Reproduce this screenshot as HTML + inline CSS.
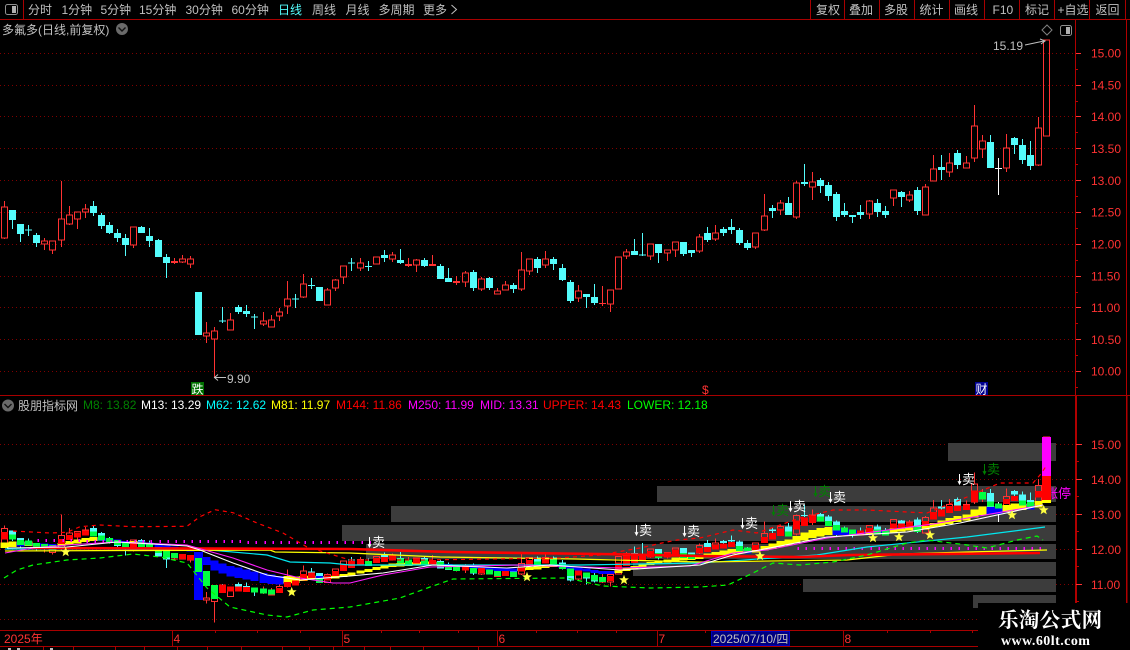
<!DOCTYPE html>
<html lang="zh">
<head>
<meta charset="utf-8">
<title>多氟多</title>
<style>
html,body{margin:0;padding:0;background:#000;width:1130px;height:650px;overflow:hidden}
svg{display:block;position:absolute;left:0;top:0}
text{font-family:"Liberation Sans","WenQuanYi Zen Hei","Noto Sans CJK SC",sans-serif;font-size:12px;fill:#c0c0c0}
.r{fill:#ff3232}
.crisp{shape-rendering:crispEdges}
</style>
</head>
<body>
<svg id="s" width="1130" height="650" viewBox="0 0 1130 650" xmlns="http://www.w3.org/2000/svg">
  <rect width="1130" height="650" fill="#000"/>
  <g id="grid"></g>
  <g class="crisp" fill="#3c3c3c">
    <rect x="948" y="443" width="108" height="18"/>
    <rect x="657" y="486" width="399" height="16"/>
    <rect x="391" y="506" width="665" height="16"/>
    <rect x="342" y="525" width="714" height="16"/>
    <rect x="366" y="544" width="690" height="15"/>
    <rect x="633" y="562" width="423" height="14"/>
    <rect x="803" y="579" width="253" height="13"/>
    <rect x="973" y="595" width="83" height="13"/>
  </g>
  <g id="up" class="crisp"></g>
  <g id="low" class="crisp"></g>
  <text x="1045" y="498" style="fill:#f0f;font-size:13px">涨停</text>
  <g id="bands" class="crisp"></g>
  <g id="lines" fill="none"></g>

  <!-- toolbar -->
  <g class="crisp" stroke="#a80000" fill="none">
    <path d="M0 19.5H1130M0 395.5H1075M23.5 0V19M810.5 0V19M844.5 0V19M879.5 0V19M914.5 0V19M949.5 0V19M984.5 0V19M1019.5 0V19M1054.5 0V19M1089.5 0V19M1125.5 0V19"/>
    <path d="M1075.5 20V603M1126.5 20V603" stroke="#b00000"/>
    <path d="M1076.5 396V603M1127 396V603" stroke="#b00000"/>
    <path d="M1075 395.5H1130"/>
    <path d="M0 630.5H978M0 646.5H978M172.5 630V646M342.5 630V646M497.5 630V646M657.5 630V646M843.5 630V646"/>
    <path d="M215.5 630V633M257.5 630V633M300.5 630V633M381.5 630V633M419.5 630V633M458.5 630V633M536.5 630V633M577.5 630V633M616.5 630V633M705.5 630V633M887.5 630V633M930.5 630V633M972.5 630V633"/>
    <path d="M43.5 646V650M73.5 646V650M115.5 646V650M144.5 646V650M177.5 646V650M207.5 646V650M241.5 646V650M282.5 646V650M309.5 646V650M333.5 646V650M364.5 646V650M390.5 646V650M423.5 646V650M478.5 646V650"/>
  </g>
  <g class="crisp" fill="#c0c0c0"><rect x="8" y="648" width="3" height="2"/><rect x="17" y="648" width="3" height="2"/><rect x="50" y="648" width="3" height="2"/></g>

  <!-- window icon -->
  <rect x="5.5" y="4.5" width="12" height="10" rx="2" fill="none" stroke="#909090"/>
  <rect x="12" y="6" width="4" height="7" fill="#b0b0b0"/>
  <text x="28" y="14">分时</text>
  <text x="61.5" y="14">1分钟</text>
  <text x="100.5" y="14">5分钟</text>
  <text x="139" y="14">15分钟</text>
  <text x="185.5" y="14">30分钟</text>
  <text x="231.5" y="14">60分钟</text>
  <text x="278" y="14" style="fill:#54fcfc">日线</text>
  <text x="312" y="14">周线</text>
  <text x="345.5" y="14">月线</text>
  <text x="378.5" y="14">多周期</text>
  <text x="423" y="14">更多</text>
  <path d="M451.5 5l5 4.5-5 4.5" fill="none" stroke="#c0c0c0"/>
  <text x="816" y="14">复权</text>
  <text x="849" y="14">叠加</text>
  <text x="884" y="14">多股</text>
  <text x="919.5" y="14">统计</text>
  <text x="954" y="14">画线</text>
  <text x="992.5" y="14">F10</text>
  <text x="1025" y="14">标记</text>
  <text x="1057.5" y="14">+自选</text>
  <text x="1095.5" y="14">返回</text>

  <text x="2" y="34">多氟多(日线,前复权)</text>
  <circle cx="122" cy="29" r="6" fill="#6a6a6a"/>
  <path d="M118.5 27.5l3.5 3.5 3.5-3.5" fill="none" stroke="#111" stroke-width="1.4"/>

  <polygon points="1047,25 1052,30 1047,35 1042,30" fill="none" stroke="#808080"/>
  <rect x="1060.5" y="25.5" width="11" height="10" rx="2" fill="none" stroke="#909090"/>
  <rect x="1066" y="27" width="4" height="7" fill="#b0b0b0"/>

  <text x="993" y="50">15.19</text>
  <path d="M1025 45L1044 41M1040 39L1045 41L1041 44" fill="none" stroke="#c0c0c0"/>
  <path d="M214 377.5H226M218 374.5L214.5 377.5L218 380.5" fill="none" stroke="#c0c0c0"/>
  <text x="227" y="383">9.90</text>

  <rect class="crisp" x="191" y="382" width="13" height="13" fill="#007000"/>
  <text x="191.5" y="393.5" style="fill:#fff">跌</text>
  <text x="702" y="394" class="r">$</text>
  <rect class="crisp" x="975" y="382" width="13" height="13" fill="#000090"/>
  <text x="975.5" y="393.5" style="fill:#fff">财</text>

  <!-- axis labels -->
  <g id="axis" class="crisp"></g>
  <text class="r" x="1091" y="57.5">15.00</text>
  <text class="r" x="1091" y="89.5">14.50</text>
  <text class="r" x="1091" y="121">14.00</text>
  <text class="r" x="1091" y="153">13.50</text>
  <text class="r" x="1091" y="185">13.00</text>
  <text class="r" x="1091" y="216.5">12.50</text>
  <text class="r" x="1091" y="248.5">12.00</text>
  <text class="r" x="1091" y="280.5">11.50</text>
  <text class="r" x="1091" y="312">11.00</text>
  <text class="r" x="1091" y="344">10.50</text>
  <text class="r" x="1091" y="375.5">10.00</text>
  <text class="r" x="1091" y="449">15.00</text>
  <text class="r" x="1091" y="484">14.00</text>
  <text class="r" x="1091" y="519">13.00</text>
  <text class="r" x="1091" y="554">12.00</text>
  <text class="r" x="1091" y="589">11.00</text>

  <!-- indicator title -->
  <circle cx="8" cy="405.5" r="6" fill="#6a6a6a"/>
  <path d="M4.5 404l3.5 3.5 3.5-3.5" fill="none" stroke="#111" stroke-width="1.4"/>
  <text x="18" y="410">股朋指标网</text>
  <text x="83" y="409" style="fill:#008000">M8: 13.82</text>
  <text x="141" y="409" style="fill:#fff">M13: 13.29</text>
  <text x="206" y="409" style="fill:#00ffff">M62: 12.62</text>
  <text x="271" y="409" style="fill:#ffff00">M81: 11.97</text>
  <text x="336" y="409" style="fill:#f00">M144: 11.86</text>
  <text x="408" y="409" style="fill:#f0f">M250: 11.99</text>
  <text x="480" y="409" style="fill:#f0f">MID: 13.31</text>
  <text x="543" y="409" style="fill:#f00">UPPER: 14.43</text>
  <text x="627" y="409" style="fill:#0f0">LOWER: 12.18</text>

  <!-- sell marks -->
  <g id="marks"></g>

  <!-- date axis -->
  <text class="r" x="4" y="643">2025年</text>
  <text class="r" x="173.5" y="643">4</text>
  <text class="r" x="343.5" y="643">5</text>
  <text class="r" x="498.5" y="643">6</text>
  <text class="r" x="658.5" y="643">7</text>
  <text class="r" x="844.5" y="643">8</text>
  <rect class="crisp" x="711.5" y="631.5" width="78" height="14" fill="#000080" stroke="#0000c0"/>
  <text x="713" y="643">2025/07/10/四</text>

  <!-- watermark -->
  <rect class="crisp" x="978" y="603" width="152" height="47" fill="#000"/>
  <text x="998" y="627" style="font-family:'Noto Serif CJK SC','Liberation Serif',serif;font-weight:700;font-size:20.5px;fill:#fff;letter-spacing:.4px">乐淘公式网</text>
  <text x="1001" y="645" style="font-family:'Liberation Serif',serif;font-weight:700;font-size:14px;fill:#fff;letter-spacing:.45px">www.60lt.com</text>
</svg>
<script>
(function(){
var D=[
['r',201,207,238,239],['c',210,210,220,229],['c',224,224,234,242],['c',225,229.5,230.5,236],['c',233,235,243,247],
['r',238,241,244,250],['r',241,241,250,254],['r',181,219,240,247],['r',206,215,224,225],['r',212,212,219,229],
['r',204,209,212,218],['c',201,206,213,216],['c',213,215,226,229],['c',222,225,233,234],['c',229,233,238,242],
['c',234,238,245,256],['r',227,227,245,248],['c',226,227,233,233],['c',228,236,241,247],['c',239,240,257,257],
['c',254,257,263,278],['f',258,261,263,264],['r',255,259,262,263],['r',256,259,264,268],['c',292,292,335,335],
['r',322,333,336,343],['r',327,331,339,377],['c',307,320.5,321.5,323],['r',313,320,330,330],['c',305,307,312,314],
['c',305,311,314,317],['c',314,316.5,317.5,329],['r',312,321,324,326],['r',315,320,327,327],['r',308,312,316,321],
['r',281,299,306,314],['c',294,298.5,299.5,308],['r',274,284,297,298],['c',278,285,286,289],['c',287,287,301,301],
['r',288,290,305,305],['r',279,280,288,291],['r',266,266,277,284],['c',258,262.5,263.5,271],['r',258,263,268,271],
['c',261,266,267,271],['r',257,257,264,264],['c',250,255,258,262],['r',252,255,259,262],['c',249,260,263,264],
['f',258,264,266,267],['r',259,260,265,272],['c',258,260,266,267],['f',255,264,266,266],['c',264,266,279,279],
['c',268,278,282,282],['f',276,281,283,285],['r',271,273,282,287],['c',270,272,288,291],['r',277,279,289,291],
['c',277,278,288,290],['r',288,291,294,294],['r',281,285,290,290],['c',283,285,289,293],['r',252,270,289,291],
['r',259,259,271,275],['c',257,259,268,273],['r',251,259,265,268],['c',257,259,264,270],['c',264,268,280,281],
['c',280,282,301,303],['r',285,291,298,302],['c',294,294,297,308],['c',284,297,303,305],['f',286,303,304,306],
['r',290,290,304,312],['r',257,257,289,289],['r',249,252,256,259],['c',239,251,255,255],['c',233,254.5,255.5,256],
['r',244,244,256,260],['c',244,244,253,263],['r',250,250,253,261],['r',242,242,250,257],['c',242,242,254,256],
['c',250,250,253,257],['r',234,237,251,253],['c',227,233,240,242],['r',225,233,239,241],['c',227,229,233,236],
['c',219,227,230,234],['c',228,230,243,245],['c',240,243,248,250],['r',233,233,247,249],['r',194,216,230,231],
['c',205,208,211,218],['r',200,203,210,215],['c',197,203,215,215],['r',181,183,217,219],['c',164,182,184,186],
['r',172,182,187,200],['c',178,180,186,193],['c',182,185,196,201],['c',192,194,217,221],['c',203,211,215,217],
['c',215,215,217,223],['c',205,212,215,219],['r',200,201,214,219],['c',199,203,212,217],['c',206,211,215,218],
['r',190,190,198,206],['c',191,192,197,207],['r',191,195,200,202],['c',187,190,211,215],['r',184,187,215,215],
['r',155,169,181,181],['c',155,167,170,180],['r',153,163,172,177],['c',150,153,165,169],['r',156,163,168,168],
['r',105,126,158,162],['r',135,141,149,158],['c',135,142,168,168],['w',158,168,169,195],['r',134,148,168,172],
['c',137,138,145,154],['c',139,145,160,164],['c',141,155,166,170],['r',117,128,165,166],['r',40,40,136,136]
];
var RED='#ff3232',CY='#54fcfc';
function X(i){return Math.floor(4.5+8.08*i)+.5;}
function L(y){return 444+(y-53)*0.5503;}
function I(v){return v;}
function candles(f){
  var h='';
  D.forEach(function(d,i){
    var x=X(i),t=d[0],H=f(d[1]),O=f(d[2]),B=f(d[3]),W=f(d[4]);
    if(B-O<1)B=O+1;
    var col=t=='c'?CY:(t=='w'?'#fff':RED);
    h+='<path d="M'+x+' '+H.toFixed(1)+'V'+O.toFixed(1)+'M'+x+' '+B.toFixed(1)+'V'+W.toFixed(1)+'" stroke="'+col+'" fill="none"/>';
    if(t=='r'){
      h+='<rect x="'+(x-3)+'" y="'+O.toFixed(1)+'" width="6" height="'+(B-O).toFixed(1)+'" fill="none" stroke="'+RED+'"/>';
    }else{
      h+='<rect x="'+(x-3.5)+'" y="'+O.toFixed(1)+'" width="7" height="'+(B-O).toFixed(1)+'" fill="'+col+'"/>';
    }
  });
  return h;
}
document.getElementById('up').innerHTML=candles(I);
document.getElementById('low').innerHTML=candles(L);

/* grid */
var g='',ys=[53,85,116.5,148.5,180.5,212,244,276,307.5,339.5,371,444,479,514,549,584,619],ax='';
ys.forEach(function(y){var yy=Math.floor(y)+.5;
  g+='<path d="M0 '+yy+'H1075" stroke="#800000" stroke-dasharray="1 3" fill="none"/>';});
document.getElementById('grid').innerHTML=g;
[53,85,116.5,148.5,180.5,212,244,276,307.5,339.5,371].forEach(function(y){var yy=Math.floor(y)+.5;
  ax+='<path d="M1076 '+yy+'H1081" stroke="#ff3232"/>';
  ax+='<path d="M1076 '+(yy+16)+'H1078" stroke="#c00000"/>';});
[444,479,514,549,584].forEach(function(y){var yy=y+.5;
  ax+='<path d="M1076 '+yy+'H1082" stroke="#ff3232"/>';
  ax+='<path d="M1076 '+(yy+17)+'H1079" stroke="#c00000"/>';});
document.getElementById('axis').innerHTML=ax;

/* ribbons */
var a=539,b=544,c1=545,c2=550,prevA=a,prevC=c1,h='';
var ov={24:[558,572],25:[571,586],26:[585,599]};
D.forEach(function(d,i){
  var x=X(i),t=d[0],cl=L(t=='c'?d[3]:(t=='w'?(d[2]+d[3])/2:d[2]));
  prevA=a;prevC=c1;
  a+=(cl-a)*.7; b+=(cl-b)*.28; c1+=(cl-c1)*.16; c2+=(cl-c2)*.09;
  if(i==129){
    h+='<rect x="1042" y="437" width="9" height="39" fill="#ff00ff"/><rect x="1042" y="476" width="9" height="24" fill="#ff0000"/><rect x="1042" y="500" width="9" height="3" fill="#ffff00"/>';
    return;
  }
  var tp=Math.min(c1,c2),bt=Math.max(c1,c2);
  if(bt-tp<3)bt=tp+3;
  var up2=c1<prevC;
  if(i==24){
    h+='<rect x="'+(x-4.5)+'" y="552" width="9" height="48" fill="#0000ff"/>';
  }else{
    h+='<rect x="'+(x-4)+'" y="'+tp.toFixed(1)+'" width="8.1" height="'+(bt-tp).toFixed(1)+'" fill="'+(up2?'#ffff00':'#0000ff')+'"/>';
  }
  var t1=Math.min(a,b),b1=Math.max(a,b),col=a<prevA?'#ff0000':'#00ff40';
  if(ov[i]){t1=ov[i][0];b1=ov[i][1];col='#00ff40';}
  if(b1-t1<5)b1=t1+5;
  h+='<rect x="'+(x-3.5)+'" y="'+t1.toFixed(1)+'" width="7" height="'+(b1-t1).toFixed(1)+'" fill="'+col+'"/>';
});
/* magenta dots */
for(var i=4;i<46;i++){h+='<rect x="'+(X(i)+1)+'" y="'+(539+i*.05).toFixed(0)+'" width="1.5" height="3" fill="#ff00ff"/>';}
for(i=98;i<129;i++){h+='<rect x="'+(X(i)+1)+'" y="547" width="1.5" height="3" fill="#ff00ff"/>';}
document.getElementById('bands').innerHTML=h;

/* lines */
function P(pts,col,w,dash){
  return '<polyline points="'+pts+'" stroke="'+col+'" stroke-width="'+w+'"'+(dash?' stroke-dasharray="'+dash+'"':'')+' fill="none"/>';
}
var l='';
l+=P('5,549 100,549 210,550 267,555 290,562 330,563 350,565 580,565 640,564 700,563 817,555 867,547 967,537 1045,527','#00e8f0',1.2);
l+=P('5,551 270,550 275,552 350,553 440,557 575,559 700,562 847,560 900,554 967,552 1047,550','#ffff00',1.3);
l+=P('30,548 350,549 450,552 600,554 700,556 800,557 850,555 1040,553','#ff0000',2.6);
l+=P('5,553 33,548 67,545 117,542 187,545 233,558 267,570 300,578 333,583 350,583 383,575 430,567 517,565 620,568 690,566 733,553 767,550 827,538 933,524 1043,505','#ff20ff',1.1);
l+=P('7,548 67,547 117,542 187,546 200,550 233,563 267,575 300,580 350,576 383,573 433,565 507,568 550,565 620,570 700,565 733,555 827,537 907,532 960,523 1043,505','#ffffff',1.1);
l+=P('13,531 50,533 67,532.3 80,526.7 100,525 133,526.7 187,526.3 200,516.7 215,509.7 233,512.7 257,523 283,533 307,547 350,560 420,560 560,558 600,555 640,548 662,543 677,540 700,538 733,530 757,533 800,518 833,510 867,510 927,513 967,497 1000,483 1033,483 1040,475 1047,465','#ff0000',1.2,'4 4');
l+=P('4,578 17,570 33,565 67,560 100,558 133,554 160,557 187,563 207,588 230,607 267,615 287,617 313,610 350,607 400,598 430,587 453,579 567,578 603,586 650,588 700,587 728,585 753,573 773,563 800,565 833,562 867,555 907,543 927,540 967,545 987,548 1017,540 1037,536 1043,540','#00ff00',1.2,'5 4');
document.getElementById('lines').innerHTML=l;

/* marks */
var m='',sell=[[368,547,1],[635,535,1],[683,536,1],[741,528,1],[772,515,0],[789,511,1],[814,496,0],[829,502,1],[958,484,1],[983,474,0]];
sell.forEach(function(s){
  var col=s[2]?'#fff':'#008000',ax=s[0]+1.5,y=s[1];
  m+='<path d="M'+ax+' '+(y-10)+'V'+y+'M'+(ax-1.5)+' '+(y-3)+'L'+ax+' '+y+'L'+(ax+1.5)+' '+(y-3)+'" stroke="'+col+'" fill="none"/>';
  m+='<text x="'+(s[0]+4)+'" y="'+s[1]+'" style="fill:'+col+';font-size:13px">卖</text>';
});
[[65.7,552],[291.7,592],[527,577],[624,580],[760,556],[873,538],[899,537],[930,535],[1012,515],[1043.7,510]].forEach(function(p){
  var pts=[],r,an;
  for(var k=0;k<10;k++){r=k%2?2.2:5.2;an=-Math.PI/2+k*Math.PI/5;pts.push((p[0]+r*Math.cos(an)).toFixed(1)+','+(p[1]+r*Math.sin(an)).toFixed(1));}
  m+='<polygon points="'+pts.join(' ')+'" fill="#ffff40"/>';
});
document.getElementById('marks').innerHTML=m;
})();
</script>
</body>
</html>
